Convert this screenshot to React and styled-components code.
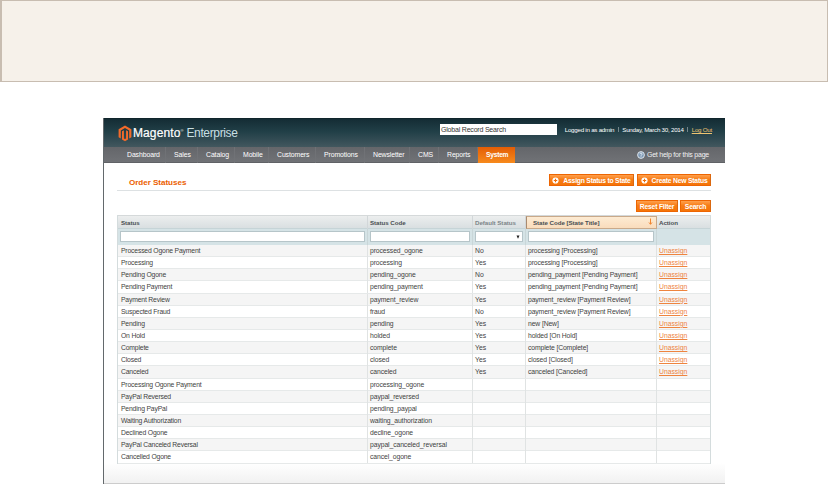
import React from "react";
import styled, { createGlobalStyle } from "styled-components";

const GlobalStyle = createGlobalStyle`
  * {
    box-sizing: border-box;
  }
  body {
    margin: 0;
    background: #fff;
    font-family: "Liberation Sans", Arial, sans-serif;
    overflow: hidden;
  }
`;

const Page = styled.div`
  width: 828px;
  height: 484px;
  overflow: hidden;
`;

const Note = styled.div`
  height: 82px;
  background: #f6f1ea;
  border: 1px solid #c8bdb1;
  border-left-width: 2px;
`;

const Admin = styled.div`
  display: flex;
  flex-direction: column;
  width: 622px;
  height: 366px;
  margin: 36px 0 0 103px;
  border-left: 1px solid #63696c;
`;

const Header = styled.header`
  display: flex;
  align-items: center;
  height: 29px;
  padding: 0 13px 0 14px;
  background: linear-gradient(#142c34, #213f47 45%, #42575e);
  border-top: 1px solid #10252b;
`;

const Logo = styled.div`
  display: flex;
  align-items: center;
  flex: none;
  width: 322px;
  color: #fff;
  font-size: 12px;
  line-height: 16px;
  white-space: pre;

  svg {
    margin-right: 1px;
  }
  b {
    font-weight: 400;
    letter-spacing: 0.1px;
    -webkit-text-stroke: 0.2px #fff;
  }
  i {
    font-size: 4px;
    font-style: normal;
    align-self: flex-start;
    line-height: 12px;
    width: 6px;
  }
  em {
    color: #c9dfe3;
    font-style: normal;
    letter-spacing: -0.35px;
  }
`;

const GlobalSearch = styled.div`
  flex: none;
  width: 117px;
  height: 11px;
  margin-bottom: 7px;
  padding-left: 1px;
  background: #fff;
  color: #333;
  font-size: 7px;
  line-height: 11px;
  letter-spacing: -0.2px;
`;

const UserInfo = styled.div`
  display: flex;
  justify-content: flex-end;
  gap: 3.5px;
  margin: 0 0 7px auto;
  color: #fff;
  font-size: 6.2px;
  line-height: 9px;
  letter-spacing: -0.25px;
  white-space: nowrap;

  i {
    width: 1px;
    height: 5px;
    margin-top: 2px;
    background: #73858a;
  }
  a {
    color: #ecc371;
    text-decoration: underline;
  }
`;

const Nav = styled.nav`
  display: flex;
  height: 16px;
  padding-left: 15px;
  background: linear-gradient(#64666a, #707276);
  border-bottom: 1px solid #606266;
`;

const NavItem = styled.a`
  width: ${(p) => p.$w}px;
  height: 16px;
  padding-left: 8px;
  color: #fff;
  font-size: 6.9px;
  letter-spacing: -0.1px;
  line-height: 16px;
  border-right: 1px solid #707276;
  white-space: nowrap;
  ${(p) =>
    p.$active &&
    `
    background: linear-gradient(#e35d05, #f78a1c);
    border-right: 0;
    font-weight: 700;
    font-size: 6.7px;
    letter-spacing: -0.25px;
  `}
`;

const Help = styled.div`
  display: flex;
  align-items: center;
  gap: 2px;
  margin: 0 16px 0 auto;
  color: #f1f1f2;
  font-size: 7px;
  letter-spacing: -0.22px;
`;

const Content = styled.main`
  display: flex;
  flex-direction: column;
  flex: 1;
  padding: 11px 14px 0 13px;
  background: linear-gradient(#fff 300px, #f2f2f2 319px);
  border-bottom: 1px solid #ccc;
`;

const TitleBar = styled.div`
  display: flex;
  justify-content: space-between;
  height: 17px;
  padding-left: 12px;
  border-bottom: 1px solid #dde1e3;
`;

const Title = styled.h1`
  margin: 0;
  color: #eb5e00;
  font-size: 8.1px;
  line-height: 17px;
  letter-spacing: -0.05px;
`;

const Buttons = styled.div`
  display: flex;
  justify-content: flex-end;
  gap: 3px;
`;

const Button = styled.button`
  display: flex;
  align-items: center;
  justify-content: center;
  gap: 4px;
  width: ${(p) => p.$w}px;
  height: 12px;
  padding: 0;
  border: 1px solid #ed6502;
  border-right-color: #d96810;
  background: linear-gradient(#ffa04d, #f77c16 45%, #f47408);
  color: #fff;
  font: 700 6.8px "Liberation Sans", Arial, sans-serif;
  letter-spacing: -0.22px;
  white-space: nowrap;
`;

const FilterBar = styled(Buttons)`
  gap: 2px;
  height: 24px;
  padding-top: 9px;
`;

const columns = "250px 105px 53px 131px 53px";

const Grid = styled.div`
  width: 594px;
  border: 0 solid #d4dcdd;
  border-right-width: 1px;
  border-left-width: 1px;
`;

const HeadRow = styled.div`
  display: grid;
  grid-template-columns: ${columns};
  height: 13px;
  border-top: 1px solid #d5d9da;
  background: linear-gradient(#eceeee, #d9dfe1);
`;

const HeadCell = styled.div`
  display: flex;
  justify-content: space-between;
  padding: 0 3px 0 2px;
  border-right: 1px solid #d2d7d9;
  color: ${(p) => (p.$muted ? "#7c8588" : "#4a4f52")};
  font-size: 6.2px;
  font-weight: 700;
  line-height: 13px;
  letter-spacing: -0.05px;
  white-space: nowrap;

  &:first-child {
    padding-left: 3px;
  }
  &:last-child {
    border-right: 0;
  }
  ${(p) =>
    p.$sorted &&
    `
    padding-left: 6px;
    background: linear-gradient(#fdebd3, #f9dcbc);
    border: 1px solid #c9a98a;
    border-left-color: #a98b70;
    line-height: 11px;
  `}
`;

const FilterRow = styled.div`
  display: grid;
  grid-template-columns: ${columns};
  height: 17px;
  background: #d5e3e6;
  border-top: 1px solid #c6d4d7;
`;

const FilterCell = styled.div`
  padding: 2px 2px 3px;
  border-right: 1px solid #c9d6d8;

  &:last-child {
    border-right: 0;
  }
`;

const Field = styled.div`
  display: flex;
  align-items: center;
  justify-content: flex-end;
  height: 11px;
  padding-right: 2px;
  background: #fff;
  border: 1px solid #b6c5c9;
`;

const Row = styled.div`
  display: grid;
  grid-template-columns: ${columns};
  height: 12.15px;
  background: ${(p) => (p.$even ? "#f5f5f5" : "#fff")};
  border-bottom: 1px solid #e6e9e9;
`;

const Cell = styled.div`
  padding-left: 2px;
  border-right: 1px solid #e0e3e3;
  color: #3f3f3f;
  font-size: 6.8px;
  line-height: 12px;
  letter-spacing: ${(p) => p.$ls || 0}px;
  white-space: nowrap;

  &:first-child {
    padding-left: 3px;
  }
  &:last-child {
    border-right: 0;
  }
  a {
    color: #ee843f;
    text-decoration: underline;
  }
`;

const menu = [
  ["Dashboard", 47],
  ["Sales", 32],
  ["Catalog", 37],
  ["Mobile", 34],
  ["Customers", 47],
  ["Promotions", 49],
  ["Newsletter", 45],
  ["CMS", 29],
  ["Reports", 39],
  ["System", 37],
];

const statuses = [
  ["Processed Ogone Payment", "processed_ogone", "No", "processing [Processing]"],
  ["Processing", "processing", "Yes", "processing [Processing]"],
  ["Pending Ogone", "pending_ogone", "No", "pending_payment [Pending Payment]"],
  ["Pending Payment", "pending_payment", "Yes", "pending_payment [Pending Payment]"],
  ["Payment Review", "payment_review", "Yes", "payment_review [Payment Review]"],
  ["Suspected Fraud", "fraud", "No", "payment_review [Payment Review]"],
  ["Pending", "pending", "Yes", "new [New]"],
  ["On Hold", "holded", "Yes", "holded [On Hold]"],
  ["Complete", "complete", "Yes", "complete [Complete]"],
  ["Closed", "closed", "Yes", "closed [Closed]"],
  ["Canceled", "canceled", "Yes", "canceled [Canceled]"],
  ["Processing Ogone Payment", "processing_ogone"],
  ["PayPal Reversed", "paypal_reversed"],
  ["Pending PayPal", "pending_paypal"],
  ["Waiting Authorization", "waiting_authorization"],
  ["Declined Ogone", "decline_ogone"],
  ["PayPal Canceled Reversal", "paypal_canceled_reversal"],
  ["Cancelled Ogone", "cancel_ogone"],
];

const MagentoMark = () => (
  <svg width="14" height="17" viewBox="0 0 14 17">
    <path
      d="M7 0.5L13.4 4.2V12.3L11.2 13.5V5.5L7 3L2.8 5.5V13.5L0.6 12.3V4.2Z"
      fill="#f26a2a"
    />
    <path
      d="M4 6.2L5.9 5.2V13.4L7 14L8.1 13.4V5.2L10 6.2V14.4L7 16.3L4 14.4Z"
      fill="#f26a2a"
    />
  </svg>
);

const PlusIcon = () => (
  <svg width="7" height="7" viewBox="0 0 7 7">
    <circle cx="3.5" cy="3.5" r="3.1" fill="#fff" />
    <path d="M3.5 1.8V5.2M1.8 3.5H5.2" stroke="#ef6d08" strokeWidth="1.1" />
  </svg>
);

const HelpIcon = () => (
  <svg width="8" height="8" viewBox="0 0 8 8">
    <circle cx="4" cy="4" r="3.4" fill="#7e99b5" stroke="#e8edf2" strokeWidth="0.9" />
    <path
      d="M2.9 3.2C3 1.8 5.2 1.9 5.1 3.2C5 3.9 4 3.9 4 4.8M4 5.4V6.1"
      fill="none"
      stroke="#fff"
      strokeWidth="0.8"
    />
  </svg>
);

const SortArrow = () => (
  <svg width="5" height="9" viewBox="0 0 5 9">
    <path d="M2.5 1.5V7.2M1 5.5L2.5 7.3L4 5.5" fill="none" stroke="#f1852f" />
  </svg>
);

const SelectArrow = () => (
  <svg width="4" height="4" viewBox="0 0 4 4">
    <path d="M0.5 0.5H3.5L2 3.8Z" fill="#222" />
  </svg>
);

const App = () => {
  return (
    <Page>
      <GlobalStyle />
      <Note />
      <Admin>
        <Header>
          <Logo>
            <MagentoMark />
            <b>Magento</b>
            <i>®</i>
            <em>Enterprise</em>
          </Logo>
          <GlobalSearch>Global Record Search</GlobalSearch>
          <UserInfo>
            <span>Logged in as admin</span>
            <i />
            <span>Sunday, March 30, 2014</span>
            <i />
            <a>Log Out</a>
          </UserInfo>
        </Header>
        <Nav>
          {menu.map(([label, width]) => (
            <NavItem key={label} $w={width} $active={label === "System"}>
              {label}
            </NavItem>
          ))}
          <Help>
            <HelpIcon />
            Get help for this page
          </Help>
        </Nav>
        <Content>
          <TitleBar>
            <Title>Order Statuses</Title>
            <Buttons>
              <Button $w={85}>
                <PlusIcon />
                Assign Status to State
              </Button>
              <Button $w={74}>
                <PlusIcon />
                Create New Status
              </Button>
            </Buttons>
          </TitleBar>
          <FilterBar>
            <Button $w={42}>Reset Filter</Button>
            <Button $w={31}>Search</Button>
          </FilterBar>
          <Grid>
            <HeadRow>
              <HeadCell>Status</HeadCell>
              <HeadCell>Status Code</HeadCell>
              <HeadCell $muted>Default Status</HeadCell>
              <HeadCell $sorted>
                State Code [State Title]
                <SortArrow />
              </HeadCell>
              <HeadCell>Action</HeadCell>
            </HeadRow>
            <FilterRow>
              <FilterCell>
                <Field />
              </FilterCell>
              <FilterCell>
                <Field />
              </FilterCell>
              <FilterCell>
                <Field>
                  <SelectArrow />
                </Field>
              </FilterCell>
              <FilterCell>
                <Field />
              </FilterCell>
              <FilterCell />
            </FilterRow>
            {statuses.map(([label, code, isDefault, state], i) => (
              <Row key={code} $even={i % 2 === 0}>
                <Cell $ls={-0.17}>{label}</Cell>
                <Cell $ls={-0.09}>{code}</Cell>
                <Cell>{isDefault}</Cell>
                <Cell $ls={-0.12}>{state}</Cell>
                <Cell>{state && <a>Unassign</a>}</Cell>
              </Row>
            ))}
          </Grid>
        </Content>
      </Admin>
    </Page>
  );
};

export default App;
